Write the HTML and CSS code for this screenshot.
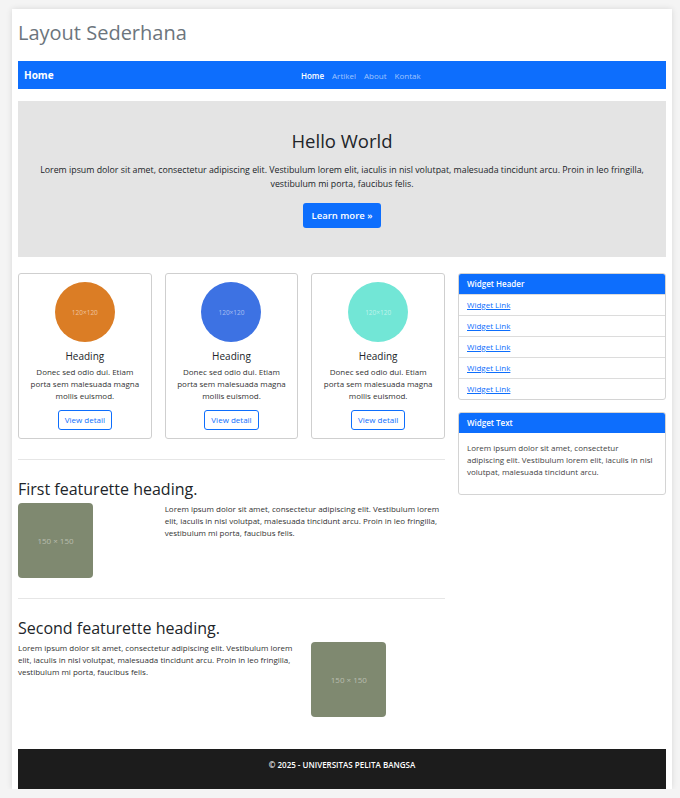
FILE: index.html
```html
<!DOCTYPE html>
<html lang="id">
<head>
<meta charset="utf-8">
<title>Layout Sederhana</title>
<link rel="stylesheet" href="styles.css">
</head>
<body>
<div class="page">
  <header class="site-header"><h1 class="site-title">Layout Sederhana</h1></header>
  <nav class="navbar">
    <a class="brand" href="#">Home</a>
    <ul class="nav-links">
      <li><a class="active" href="#">Home</a></li>
      <li><a href="#">Artikel</a></li>
      <li><a href="#">About</a></li>
      <li><a href="#">Kontak</a></li>
    </ul>
  </nav>
  <section class="hero">
    <h2 class="hero-title">Hello World</h2>
    <p class="hero-text">Lorem ipsum dolor sit amet, consectetur adipiscing elit. Vestibulum lorem elit, iaculis in nisl volutpat, malesuada tincidunt arcu. Proin in leo fringilla, vestibulum mi porta, faucibus felis.</p>
    <a class="btn-primary" href="#">Learn more »</a>
  </section>
  <div class="layout">
    <main class="main">
      <div class="cards">
        <div class="card">
          <div class="circle orange">120×120</div>
          <h3 class="card-title">Heading</h3>
          <p class="card-text">Donec sed odio dui. Etiam porta sem malesuada magna mollis euismod.</p>
          <a class="btn-outline" href="#">View detail</a>
        </div>
        <div class="card">
          <div class="circle blue">120×120</div>
          <h3 class="card-title">Heading</h3>
          <p class="card-text">Donec sed odio dui. Etiam porta sem malesuada magna mollis euismod.</p>
          <a class="btn-outline" href="#">View detail</a>
        </div>
        <div class="card">
          <div class="circle teal">120×120</div>
          <h3 class="card-title">Heading</h3>
          <p class="card-text">Donec sed odio dui. Etiam porta sem malesuada magna mollis euismod.</p>
          <a class="btn-outline" href="#">View detail</a>
        </div>
      </div>
      <hr class="divider">
      <h2 class="feat-title">First featurette heading.</h2>
      <div class="featurette">
        <div class="feat-img">150 × 150</div>
        <p class="feat-text span2">Lorem ipsum dolor sit amet, consectetur adipiscing elit. Vestibulum lorem elit, iaculis in nisl volutpat, malesuada tincidunt arcu. Proin in leo fringilla, vestibulum mi porta, faucibus felis.</p>
      </div>
      <hr class="divider">
      <h2 class="feat-title">Second featurette heading.</h2>
      <div class="featurette">
        <p class="feat-text span2">Lorem ipsum dolor sit amet, consectetur adipiscing elit. Vestibulum lorem elit, iaculis in nisl volutpat, malesuada tincidunt arcu. Proin in leo fringilla, vestibulum mi porta, faucibus felis.</p>
        <div class="feat-img">150 × 150</div>
      </div>
    </main>
    <aside class="sidebar">
      <div class="widget">
        <div class="widget-header">Widget Header</div>
        <ul class="widget-list">
          <li><a href="#">Widget Link</a></li>
          <li><a href="#">Widget Link</a></li>
          <li><a href="#">Widget Link</a></li>
          <li><a href="#">Widget Link</a></li>
          <li><a href="#">Widget Link</a></li>
        </ul>
      </div>
      <div class="widget">
        <div class="widget-header">Widget Text</div>
        <div class="widget-body">
          <p>Lorem ipsum dolor sit amet, consectetur adipiscing elit. Vestibulum lorem elit, iaculis in nisl volutpat, malesuada tincidunt arcu.</p>
        </div>
      </div>
    </aside>
  </div>
  <footer class="footer">© 2025 - UNIVERSITAS PELITA BANGSA</footer>
</div>
</body>
</html>
```
FILE: styles.css
```css
* { box-sizing: border-box; }
html, body { margin: 0; }
body {
  background: #f4f4f4;
  font-family: "Open Sans", "Noto Sans", sans-serif;
  color: #212529;
  padding: 9px 8px 0 12px;
}
.page {
  background: #fff;
  padding: 0 6px;
  box-shadow: 0 0 6px rgba(0,0,0,0.12);
}
.site-header { padding: 12px 0 16px; }
.site-title {
  margin: 0;
  font-size: 20px;
  font-weight: 400;
  line-height: 24px;
  color: #6c757d;
}
.navbar {
  background: #0d6efd;
  height: 28px;
  display: flex;
  align-items: center;
  padding: 0 6px;
}
.brand {
  color: #fff;
  font-weight: 700;
  font-size: 10px;
  text-decoration: none;
  margin-right: 8px;
}
.nav-links {
  list-style: none;
  margin: 0 auto;
  padding: 0;
  display: flex;
}
.nav-links a {
  display: block;
  padding: 0 4px;
  font-size: 8px;
  color: rgba(255,255,255,0.6);
  text-decoration: none;
}
.nav-links a.active { color: #fff; font-weight: 600; }
.hero {
  background: #e4e4e4;
  margin-top: 12px;
  padding: 28px 12px 29px;
  text-align: center;
  display: flex;
  flex-direction: column;
  align-items: center;
}
.hero-title {
  margin: 0 0 10px;
  font-size: 18.5px;
  font-weight: 400;
  line-height: 24px;
}
.hero-text {
  margin: 0 0 12px;
  font-size: 8.8px;
  line-height: 14px;
}
.btn-primary {
  display: block;
  background: #0d6efd;
  color: #fff;
  font-size: 9.5px;
  font-weight: 600;
  line-height: 15px;
  padding: 5px 9px;
  border-radius: 3px;
  text-decoration: none;
}
.layout {
  display: grid;
  grid-template-columns: 427px 208px;
  gap: 13px;
  margin-top: 16px;
  align-items: start;
}
.cards {
  display: grid;
  grid-template-columns: repeat(3, 1fr);
  gap: 13px;
}
.card {
  border: 1px solid #cfcfcf;
  border-radius: 3px;
  padding: 8px 8px 8px;
  text-align: center;
  display: flex;
  flex-direction: column;
  align-items: center;
}
.circle {
  width: 60px;
  height: 60px;
  border-radius: 50%;
  display: flex;
  align-items: center;
  justify-content: center;
  font-size: 6.5px;
  color: rgba(255,255,255,0.55);
}
.orange { background: #db7d25; }
.blue { background: #3d72e3; }
.teal { background: #72e6d6; }
.card-title {
  margin: 8px 0 4px;
  font-size: 10px;
  font-weight: 400;
  line-height: 12px;
}
.card-text {
  margin: 0 0 8px;
  font-size: 8px;
  line-height: 12px;
  color: #333;
}
.btn-outline {
  display: block;
  border: 1px solid #0d6efd;
  border-radius: 3px;
  color: #0d6efd;
  font-size: 8px;
  line-height: 12px;
  padding: 3px 6px;
  text-decoration: none;
}
.divider {
  border: 0;
  border-top: 1px solid #e6e6e6;
  margin: 20px 0 18px;
}
.feat-title {
  margin: 0 0 3px;
  font-size: 16px;
  font-weight: 400;
  line-height: 22px;
}
.featurette {
  display: grid;
  grid-template-columns: repeat(3, 1fr);
  gap: 13px;
}
.feat-img {
  width: 75px;
  height: 75px;
  background: #7f8970;
  border-radius: 4px;
  display: flex;
  align-items: center;
  justify-content: center;
  color: rgba(255,255,255,0.45);
  font-size: 8px;
}
.feat-text {
  margin: 0;
  font-size: 8px;
  line-height: 12px;
  color: #333;
}
.span2 { grid-column: span 2; }
.widget {
  border: 1px solid #d4d4d4;
  border-radius: 3px;
  overflow: hidden;
  margin-bottom: 12px;
}
.widget-header {
  background: #0d6efd;
  color: #fff;
  font-size: 8px;
  font-weight: 600;
  line-height: 20px;
  padding: 0 8px;
}
.widget-list { list-style: none; margin: 0; padding: 0; }
.widget-list li {
  border-top: 1px solid #dcdcdc;
  padding: 0 8px;
  line-height: 20px;
  font-size: 8px;
}
.widget-list a { color: #0d6efd; text-decoration: underline; }
.widget-body { padding: 9px 8px 16px; }
.widget-body p {
  margin: 0;
  font-size: 8px;
  line-height: 12px;
  color: #444;
}
.footer {
  margin-top: 32px;
  background: #1c1c1c;
  color: #fff;
  text-align: center;
  font-size: 8px;
  font-weight: 600;
  height: 40px;
  line-height: 32px;
}
```
